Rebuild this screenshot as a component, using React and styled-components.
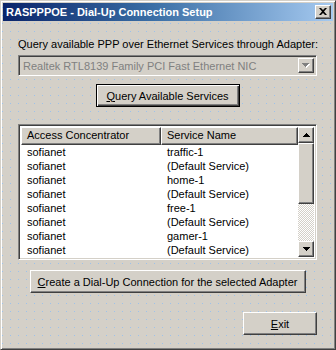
import React from "react";
import styled, { createGlobalStyle } from "styled-components";

const Global = createGlobalStyle`
  html, body { margin: 0; padding: 0; background: #d4d0c8; }
  body { font-family: "Liberation Sans", Arial, sans-serif; font-size: 11px; color: #000; }
  * { box-sizing: border-box; }
`;

const Win = styled.div`
  width: 336px;
  height: 350px;
  background-color: #d4d0c8;
  background-image:
    linear-gradient(to right, transparent 1px, #d4d0c8 1px),
    linear-gradient(to bottom, #9cc2ec 1px, #d4d0c8 1px);
  background-size: 8px 8px, 8px 8px;
  background-position: 1px 6px, 1px 6px;
  border: 1px solid;
  border-color: #d4d0c8 #404040 #404040 #d4d0c8;
  box-shadow: inset 1px 1px 0 #fff, inset -1px -1px 0 #808080;
  padding: 2px;
  display: flex;
  flex-direction: column;
`;

const TitleBar = styled.div`
  height: 18px;
  flex: none;
  background: linear-gradient(to right, #0a246a 0%, #3a6ea5 45%, #a6caf0 100%);
  display: flex;
  align-items: center;
  padding: 0 2px 0 3px;
`;

const TitleText = styled.div`
  flex: 1;
  color: #fff;
  font-family: "Liberation Sans", Arial, sans-serif;
  font-weight: bold;
  font-size: 11px;
  white-space: nowrap;
`;

const Raised = styled.div`
  background: #d4d0c8;
  border: 1px solid;
  border-color: #fff #404040 #404040 #fff;
  box-shadow: inset -1px -1px 0 #808080;
`;

const CloseBtn = styled(Raised)`
  width: 16px;
  height: 14px;
  display: flex;
  align-items: center;
  justify-content: center;
  padding-bottom: 1px;
`;

const Body = styled.div`
  flex: 1;
  display: flex;
  flex-direction: column;
  padding: 17px 16px 0 15px;
`;

const Label = styled.div`
  text-align: center;
  line-height: 13px;
  height: 13px;
  margin-bottom: 4px;
  white-space: nowrap;
`;

const Sunken = styled.div`
  border: 1px solid;
  border-color: #808080 #fff #fff #808080;
  box-shadow: inset 1px 1px 0 #404040, inset -1px -1px 0 #d4d0c8;
`;

const Combo = styled(Sunken)`
  height: 21px;
  display: flex;
  align-items: stretch;
  padding: 2px;
  background: #d4d0c8;
`;

const ComboText = styled.div`
  flex: 1;
  color: #808080;
  line-height: 17px;
  padding-left: 2px;
  white-space: nowrap;
  overflow: hidden;
`;

const ArrowBtn = styled(Raised)`
  width: 16px;
  flex: none;
  display: flex;
  align-items: center;
  justify-content: center;
`;

const Center = styled.div`
  display: flex;
  justify-content: ${(p) => p.$align || "center"};
  margin-top: ${(p) => p.$mt || 0}px;
`;

const Button = styled.div`
  width: ${(p) => p.$w}px;
  height: 23px;
  display: flex;
  align-items: center;
  justify-content: center;
  background: #d4d0c8;
  border: 1px solid;
  border-color: ${(p) => (p.$default ? "#000" : "#fff #404040 #404040 #fff")};
  box-shadow: ${(p) =>
    p.$default
      ? "inset 1px 1px 0 #fff, inset -1px -1px 0 #404040, inset -2px -2px 0 #808080"
      : "inset -1px -1px 0 #808080"};
  white-space: nowrap;
`;

const U = styled.span`
  text-decoration: underline;
`;

const List = styled(Sunken)`
  margin-top: 17px;
  height: 136px;
  background: #fff;
  padding: 2px;
  display: flex;
`;

const ListMain = styled.div`
  flex: 1;
  overflow: hidden;
  display: flex;
  flex-direction: column;
`;

const Header = styled.div`
  display: flex;
  height: 18px;
  flex: none;
`;

const HeadCell = styled(Raised)`
  width: ${(p) => p.$w}px;
  flex: ${(p) => (p.$grow ? 1 : "none")};
  line-height: 15px;
  padding-left: 5px;
  white-space: nowrap;
  overflow: hidden;
`;

const Row = styled.div`
  display: flex;
  height: 14px;
  line-height: 14px;
  flex: none;
`;

const Cell = styled.div`
  width: ${(p) => p.$w}px;
  flex: ${(p) => (p.$grow ? 1 : "none")};
  padding-left: 6px;
  white-space: nowrap;
`;

const ScrollBar = styled.div`
  width: 16px;
  flex: none;
  display: flex;
  flex-direction: column;
`;

const SBtn = styled(Raised)`
  height: ${(p) => p.$h}px;
  flex: none;
  display: flex;
  align-items: center;
  justify-content: center;
`;

const Track = styled.div`
  flex: 1;
  background-color: #fff;
  background-image: repeating-conic-gradient(#d4d0c8 0 25%, #fff 0 50%);
  background-size: 2px 2px;
`;

const Up = () => (
  <svg width="7" height="4" viewBox="0 0 7 4">
    <path d="M3 0h1v1h1v1h1v1h1v1H0V3h1V2h1V1h1z" fill="#000" />
  </svg>
);
const Down = () => (
  <svg width="7" height="4" viewBox="0 0 7 4">
    <path d="M0 0h7v1H6v1H5v1H4v1H3V3H2V2H1V1H0z" fill="#000" />
  </svg>
);

const rows = [
  ["sofianet", "traffic-1"],
  ["sofianet", "(Default Service)"],
  ["sofianet", "home-1"],
  ["sofianet", "(Default Service)"],
  ["sofianet", "free-1"],
  ["sofianet", "(Default Service)"],
  ["sofianet", "gamer-1"],
  ["sofianet", "(Default Service)"],
  ["sofianet", "home-2"],
];

export default function App() {
  return (
    <>
      <Global />
      <Win>
        <TitleBar>
          <TitleText>RASPPPOE - Dial-Up Connection Setup</TitleText>
          <CloseBtn>
            <svg width="8" height="7" viewBox="0 0 8 7">
              <path d="M0 0h2l2 2 2-2h2L5 3.5 8 7H6L4 5 2 7H0l3-3.5z" fill="#000" />
            </svg>
          </CloseBtn>
        </TitleBar>
        <Body>
          <Label>Query available PPP over Ethernet Services through Adapter:</Label>
          <Combo>
            <ComboText>Realtek RTL8139 Family PCI Fast Ethernet NIC</ComboText>
            <ArrowBtn>
              <svg width="8" height="5" viewBox="0 0 8 5">
                <path d="M1 1h7v1H7v1H6v1H5v1H4V4H3V3H2V2H1z" fill="#fff" />
                <path d="M0 0h7v1H6v1H5v1H4v1H3V3H2V2H1V1H0z" fill="#808080" />
              </svg>
            </ArrowBtn>
          </Combo>
          <Center $mt={8}>
            <Button $w={144} $default>
              <span><U>Q</U>uery Available Services</span>
            </Button>
          </Center>
          <List>
            <ListMain>
              <Header>
                <HeadCell $w={140}>Access Concentrator</HeadCell>
                <HeadCell $grow>Service Name</HeadCell>
              </Header>
              {rows.map((r, i) => (
                <Row key={i}>
                  <Cell $w={140}>{r[0]}</Cell>
                  <Cell $grow>{r[1]}</Cell>
                </Row>
              ))}
            </ListMain>
            <ScrollBar>
              <SBtn $h={16}><Up /></SBtn>
              <SBtn $h={61} />
              <Track />
              <SBtn $h={16}><Down /></SBtn>
            </ScrollBar>
          </List>
          <Center $mt={10}>
            <Button $w={276}>
              <span><U>C</U>reate a Dial-Up Connection for the selected Adapter</span>
            </Button>
          </Center>
          <Center $mt={19} $align="flex-end">
            <Button $w={74}>
              <span><U>E</U>xit</span>
            </Button>
          </Center>
        </Body>
      </Win>
    </>
  );
}
